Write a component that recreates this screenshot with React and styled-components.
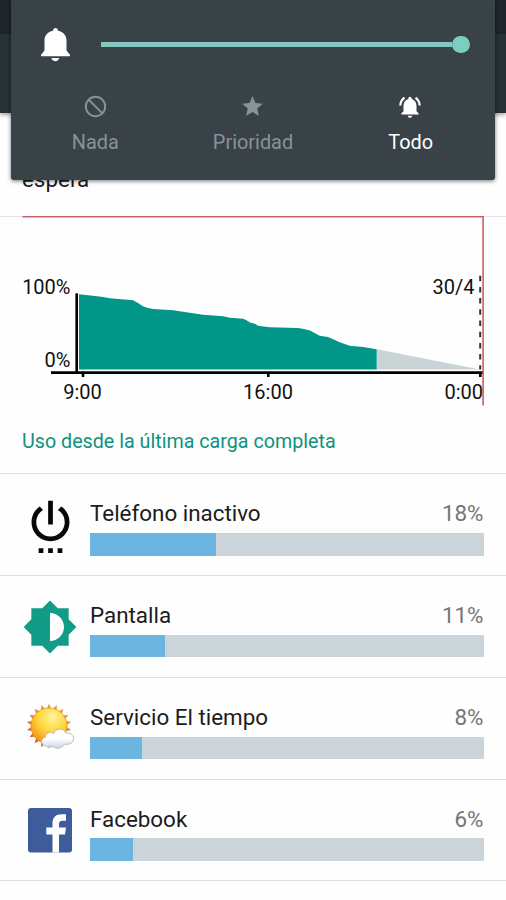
import styled, { createGlobalStyle } from 'styled-components';
import {
  MdStar,
  MdNotificationsActive,
  MdSettingsPower,
  MdBrightnessMedium,
} from 'react-icons/md';

const GlobalStyle = createGlobalStyle`
  * {
    box-sizing: border-box;
  }
  body {
    margin: 0;
    background: #fefefe;
    font-family: Roboto, "Noto Sans", sans-serif;
    color: #1c1c1c;
  }
  svg {
    display: block;
  }
`
const Screen = styled.div`
  position: relative;
  width: 506px;
  height: 900px;
  overflow: hidden;
  background: #fefefe;
`
const StatusBar = styled.div`
  height: 34px;
  background: #1e272b;
`
const Toolbar = styled.div`
  height: 79px;
  background: #263238;
  box-shadow: 0 2px 4px rgba(0, 0, 0, 0.35);
`
const Summary = styled.div`
  height: 104px;
  padding: 53px 22px 0;
  border-bottom: 1px solid #e4e4e4;
  font-size: 22.4px;
  line-height: 26px;
`
const ChartSection = styled.div`
  display: flow-root;
  height: 257.4px;
  border-bottom: 1px solid #e2e4e4;
`
const ChartSvg = styled.svg`
  margin-top: -1px;
`
const ChartText = styled.text`
  font-size: 20px;
  fill: #111;
`
const ChartTitle = styled.p`
  margin: 24px 22px 0;
  font-size: 19.7px;
  line-height: 24px;
  color: #109180;
`
const Row = styled.div`
  display: flex;
  align-items: flex-start;
  height: 101.75px;
  padding-right: 22.5px;
  border-bottom: 1px solid #e0e2e2;
`
const IconBox = styled.div`
  display: flex;
  align-items: center;
  justify-content: center;
  flex: none;
  width: 90px;
  height: 101px;
  padding-right: 10px;
  padding-left: 20.5px;
  color: ${(props) => props.$color};
  svg {
    flex: none;
  }
`
const RowBody = styled.div`
  flex: 1;
`
const RowHead = styled.div`
  display: flex;
  justify-content: space-between;
  height: 58.8px;
  padding-top: 26px;
  font-size: 22.4px;
  line-height: 26px;
`
const Percent = styled.span`
  color: #757575;
`
const Track = styled.div`
  height: 22.5px;
  background: #cbd5d9;
`
const Fill = styled.div`
  height: 100%;
  background: #6db5e1;
`
const VolumePanel = styled.div`
  position: absolute;
  top: 0;
  left: 11px;
  width: 484px;
  height: 180px;
  border-radius: 0 0 3px 3px;
  background: #384247;
  box-shadow: 0 1px 4px rgba(0, 0, 0, 0.55);
`
const VolumeRow = styled.div`
  display: flex;
  align-items: center;
  gap: 30.5px;
  height: 89px;
  padding: 0 25.5px 0 29.5px;
`
const Slider = styled.div`
  display: flex;
  align-items: center;
  justify-content: flex-end;
  flex: 1;
`
const SliderLine = styled.div`
  flex: 1;
  height: 5px;
  background: #86c7c0;
`
const SliderThumb = styled.div`
  width: 17.5px;
  height: 17.5px;
  border-radius: 50%;
  background: #7ccdc2;
`
const Modes = styled.div`
  display: flex;
  padding: 0 5.5px;
`
const Mode = styled.div`
  display: flex;
  flex-direction: column;
  align-items: center;
  flex: 1;
  font-size: 19.9px;
  line-height: 24px;
  color: ${(props) => (props.$active ? '#fff' : '#88929a')};
`
const ModeIcon = styled.div`
  display: flex;
  align-items: center;
  height: 35px;
  margin-bottom: 7px;
  padding-right: 1px;
`

function BellIcon() {
  return (
    <svg width="30" height="34" viewBox="0 0 30 34" fill="#fff">
      <path d="M14.5 0C15.8 0 16.8 1 17 2.8C22.4 3.8 25.5 7.6 25.5 12.6V22.5L29 26.7V28.2H0V26.7L3.5 22.5V12.6C3.5 7.6 6.6 3.8 12 2.8C12.2 1 13.2 0 14.5 0Z" />
      <path d="M10.4 30H18.2C17.8 32 16.4 33.2 14.3 33.2C12.2 33.2 10.8 32 10.4 30Z" />
    </svg>
  )
}

function NoneIcon() {
  return (
    <svg width="26" height="26" viewBox="0 0 26 26" fill="none" stroke="currentColor" strokeWidth="2">
      <circle cx="13.5" cy="12.5" r="9.7" />
      <path d="M6.6 5.6L20.4 19.4" />
    </svg>
  )
}

function WeatherIcon() {
  // rays every 20 degrees around the disc
  const rays = Array.from({ length: 18 }, (_, i) => i * 20)
  return (
    <svg width="50" height="50" viewBox="-1.5 1 50 50">
      <defs>
        <linearGradient id="ray" gradientUnits="userSpaceOnUse" x1="30" y1="2" x2="14" y2="45">
          <stop offset="0" stopColor="#e9a93c" />
          <stop offset="1" stopColor="#d2561c" />
        </linearGradient>
        <radialGradient id="sun" cx="0.6" cy="0.25" r="0.8">
          <stop offset="0" stopColor="#fff59a" />
          <stop offset="0.5" stopColor="#ffd73a" />
          <stop offset="1" stopColor="#f48a1c" />
        </radialGradient>
        <linearGradient id="cloud" x1="0" y1="0" x2="0" y2="1">
          <stop offset="0.5" stopColor="#fff" />
          <stop offset="1" stopColor="#ccd5df" />
        </linearGradient>
      </defs>
      <path
        fill="url(#ray)"
        d={rays.map((a) => {
          const p = (r, d) => {
            const t = ((a + d) * Math.PI) / 180
            return `${22.5 + r * Math.sin(t)} ${24 - r * Math.cos(t)}`
          }
          return `M${p(17, -8)}L${p(22.5, 0)}L${p(17, 8)}Z`
        }).join('')}
      />
      <circle cx="22.5" cy="24" r="18" fill="url(#sun)" stroke="#e39a2c" strokeWidth="0.8" />
      <path
        d="M19 44C14 43 13.5 36.5 18.8 35.2C19 30.5 25 29.4 27.2 31.6C29 25.5 38.2 25.8 39.3 31.2C44 30.2 48 33.5 46.8 37.8C46 41.5 41.5 43.2 38.2 42C36 46.6 29 47.6 26.5 44.2C24 45.5 21 45.2 19 44Z"
        fill="url(#cloud)"
        stroke="#a9b2bb"
        strokeWidth="0.8"
      />
    </svg>
  )
}

function FacebookIcon() {
  return (
    <svg width="44" height="45" viewBox="0 0 44 45">
      <rect width="44" height="44.5" rx="3" fill="#3f5c9a" />
      <path
        d="M24.5 44.5V26.5H18.3V19.5H24.5V15.5C24.5 9.4 28 6.2 33.4 6.2H38V12.8H34.5C31.8 12.8 31 14 31 16.4V19.5H38L37 26.5H31V44.5Z"
        fill="#fff"
      />
    </svg>
  )
}

function BatteryChart() {
  return (
    <ChartSvg width="506" height="190" viewBox="0 0 506 190">
      <path
        d="M79 78.3L95 80L103 81L110 82.3L133 84.3L138 87L143 90.3L148 92L153 93L173 94.3L203 98.7L223 100.3L230 101.8L243 102.8L246 104L250 106.5L255 107.7L258 109.7L269.7 111.3L298 112L304 113L310 114.5L319.7 119.8L328 121L341 126.7L349.7 129.8L363 131L376.7 133.2V153.6H79Z"
        fill="#019688"
      />
      <path d="M377 133.2L480 153.6H377Z" fill="#c9d4d7" />
      <path d="M76.7 77.3V157" stroke="#000" strokeWidth="2.6" />
      <path d="M51 156.7H483" stroke="#000" strokeWidth="2.7" />
      <path d="M83 157V161M268.3 157V161M480.3 157V161" stroke="#000" strokeWidth="2.6" />
      <path d="M480.2 59.7V153.6" stroke="#333" strokeWidth="2" strokeDasharray="5.5 5.7" />
      <path d="M22.5 0.8H483.1V189.5" fill="none" stroke="#cb5f68" strokeWidth="1.6" />
      <ChartText x="70.5" y="78" textAnchor="end">100%</ChartText>
      <ChartText x="70.5" y="151" textAnchor="end">0%</ChartText>
      <ChartText x="82.5" y="182.8" textAnchor="middle">9:00</ChartText>
      <ChartText x="268" y="182.8" textAnchor="middle">16:00</ChartText>
      <ChartText x="483" y="182.8" textAnchor="end">0:00</ChartText>
      <ChartText x="474.5" y="78" textAnchor="end">30/4</ChartText>
    </ChartSvg>
  )
}

const usages = [
  { name: 'Teléfono inactivo', percent: 18, bar: 32, color: '#080808', icon: <MdSettingsPower size={57} /> },
  { name: 'Pantalla', percent: 11, bar: 19.1, color: '#109c87', icon: <MdBrightnessMedium size={56} /> },
  { name: 'Servicio El tiempo', percent: 8, bar: 13.1, color: '#f5a623', icon: <WeatherIcon /> },
  { name: 'Facebook', percent: 6, bar: 11, color: '#3f5c9a', icon: <FacebookIcon /> },
]

function UsageRow({ usage }) {
  return (
    <Row>
      <IconBox $color={usage.color}>{usage.icon}</IconBox>
      <RowBody>
        <RowHead>
          <span>{usage.name}</span>
          <Percent>{usage.percent}%</Percent>
        </RowHead>
        <Track>
          <Fill style={{ width: `${usage.bar}%` }} />
        </Track>
      </RowBody>
    </Row>
  )
}

function App() {
  return (
    <Screen>
      <GlobalStyle />
      <StatusBar />
      <Toolbar />
      <Summary>espera</Summary>
      <ChartSection>
        <BatteryChart />
        <ChartTitle>Uso desde la última carga completa</ChartTitle>
      </ChartSection>
      {usages.map((usage) => (
        <UsageRow key={usage.name} usage={usage} />
      ))}
      <VolumePanel>
        <VolumeRow>
          <BellIcon />
          <Slider>
            <SliderLine />
            <SliderThumb />
          </Slider>
        </VolumeRow>
        <Modes>
          <Mode>
            <ModeIcon><NoneIcon /></ModeIcon>
            Nada
          </Mode>
          <Mode>
            <ModeIcon><MdStar size={25} /></ModeIcon>
            Prioridad
          </Mode>
          <Mode $active>
            <ModeIcon><MdNotificationsActive size={26} /></ModeIcon>
            Todo
          </Mode>
        </Modes>
      </VolumePanel>
    </Screen>
  )
}

export default App
